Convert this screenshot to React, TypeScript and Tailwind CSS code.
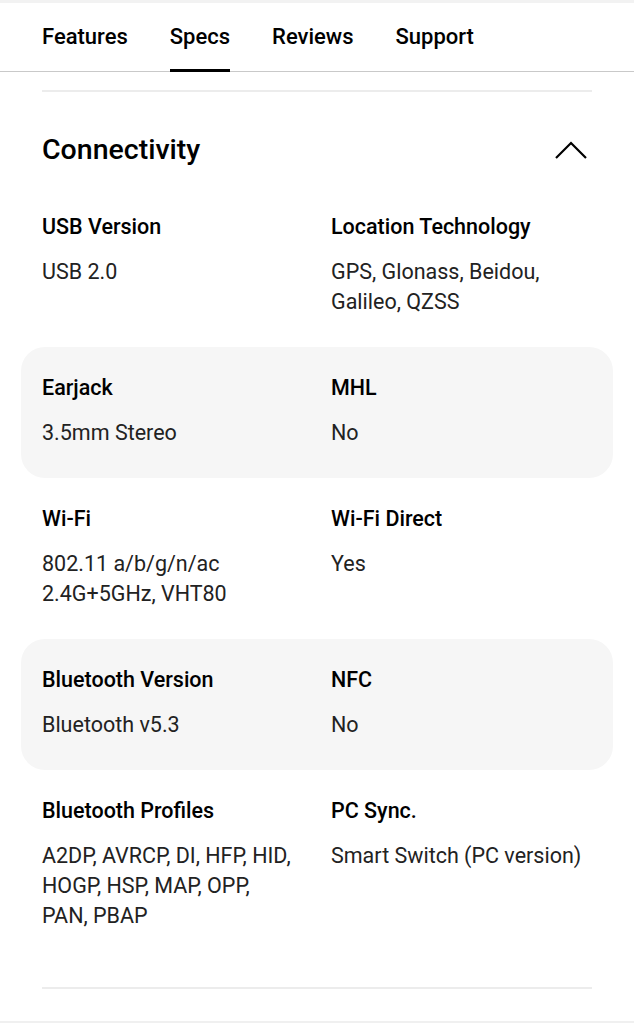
const tabs = ["Features", "Specs", "Reviews", "Support"];

const rows = [
  {
    shaded: false,
    items: [
      { label: "USB Version", value: ["USB 2.0"] },
      { label: "Location Technology", value: ["GPS, Glonass, Beidou,", "Galileo, QZSS"] },
    ],
  },
  {
    shaded: true,
    items: [
      { label: "Earjack", value: ["3.5mm Stereo"] },
      { label: "MHL", value: ["No"] },
    ],
  },
  {
    shaded: false,
    items: [
      { label: "Wi-Fi", value: ["802.11 a/b/g/n/ac", "2.4G+5GHz, VHT80"] },
      { label: "Wi-Fi Direct", value: ["Yes"] },
    ],
  },
  {
    shaded: true,
    items: [
      { label: "Bluetooth Version", value: ["Bluetooth v5.3"] },
      { label: "NFC", value: ["No"] },
    ],
  },
  {
    shaded: false,
    items: [
      { label: "Bluetooth Profiles", value: ["A2DP, AVRCP, DI, HFP, HID,", "HOGP, HSP, MAP, OPP,", "PAN, PBAP"] },
      { label: "PC Sync.", value: ["Smart Switch (PC version)"] },
    ],
  },
];

export default function App() {
  return (
    <div className="min-h-[1024px] w-[634px] bg-white font-['Roboto',sans-serif] text-black">
      <div className="h-[3px] bg-[#f2f2f2]" />
      <nav className="flex h-[69px] gap-[42px] border-b border-[#c9c9c9] px-[42px]">
        {tabs.map((t) => (
          <div key={t} className="relative flex items-center pb-[2px] text-[22px] font-medium">
            {t}
            {t === "Specs" && <span className="absolute -bottom-[1px] left-0 right-0 h-[3px] bg-black" />}
          </div>
        ))}
      </nav>

      <div className="mx-[42px] mt-[18px] h-[2px] bg-[#ececec]" />

      <div className="flex items-center justify-between px-[42px] pt-[38px] pb-[16px]">
        <h2 className="text-[28.5px] font-medium leading-[40px]">Connectivity</h2>
        <svg width="34" height="20" viewBox="0 0 34 20" className="mr-[4px]" fill="none" stroke="black" strokeWidth="2.2">
          <polyline points="2,18 17,3 32,18" />
        </svg>
      </div>

      <div className="mx-[21px]">
        {rows.map((r, i) => (
          <div
            key={i}
            className={`grid grid-cols-[289px_1fr] rounded-[24px] px-[21px] pt-[26px] pb-[30px] ${r.shaded ? "bg-[#f6f6f6]" : ""}`}
          >
            {r.items.map((it) => (
              <div key={it.label}>
                <p className="text-[21.5px] font-medium leading-[30px]">{it.label}</p>
                <div className="mt-[15px] text-[21.5px] leading-[30px] text-[#222]">
                  {it.value.map((v) => (
                    <p key={v}>{v}</p>
                  ))}
                </div>
              </div>
            ))}
          </div>
        ))}
      </div>

      <div className="mx-[42px] mt-[26px] h-[2px] bg-[#ececec]" />
      <div className="mt-[32px] h-[2px] bg-[#f0f0f0]" />
    </div>
  );
}
